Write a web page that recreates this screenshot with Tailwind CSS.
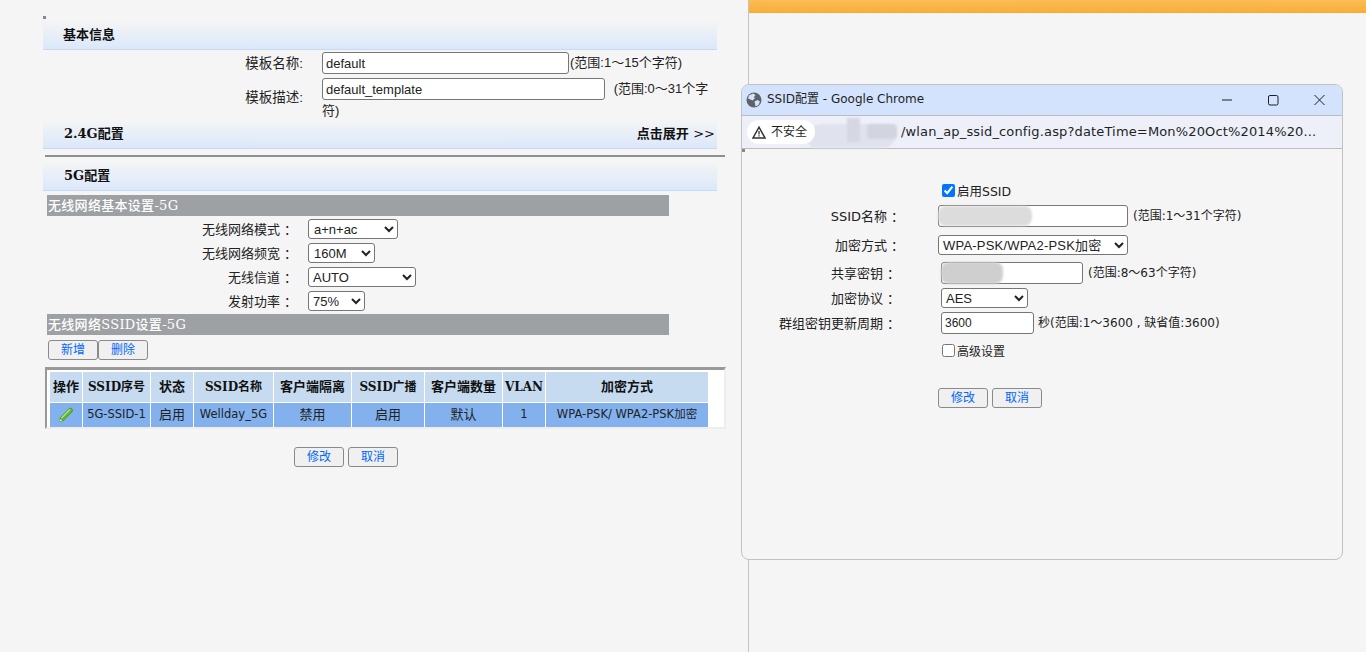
<!DOCTYPE html>
<html lang="zh-CN">
<head>
  <meta charset="UTF-8" />
  <meta name="viewport" content="width=device-width, initial-scale=1.0"/>
  <title>SSID配置</title>
  <script src="https://cdn.jsdelivr.net/npm/@tailwindcss/browser@4"></script>
</head>
<body class="bg-[#f5f5f5] h-[652px] overflow-hidden text-[13px] text-[#222] font-['Liberation_Sans','Noto_Sans_CJK_SC',sans-serif]">
<div class="relative flex h-[652px]">

  <!-- left page -->
  <div class="relative w-[749px] h-full border-r border-[#c4c4c4] pl-[43px] pt-[20px]">
    <div class="absolute left-[43px] top-[16px] w-[3px] h-[3px] bg-[#888]"></div>

    <div class="w-[674px] h-[30px] pl-[20px] flex items-center border-b border-[#c5daf3] bg-gradient-to-b from-[#f5f5f5] to-[#dbe8fa] font-bold font-['DejaVu_Serif','Noto_Sans_CJK_SC',serif] text-[13px] text-[#111]">基本信息</div>

    <div class="flex mt-[2px] h-[22px]">
      <div class="w-[260px] text-right leading-[24px] text-[13.5px]">模板名称:</div>
      <div class="ml-[19px] flex items-center">
        <input class="w-[247px] h-[22px] px-[3px] border border-[#767676] rounded-[3px] bg-white text-[13px]" value="default" />
        <span class="ml-px text-[13px]">(范围:1～15个字符)</span>
      </div>
    </div>
    <div class="flex mt-[4px] h-[41px]">
      <div class="w-[260px] text-right leading-[40px] text-[13.5px]">模板描述:</div>
      <div class="ml-[19px] w-[392px] text-[13px] leading-[18px]">
        <input class="w-[283px] h-[22px] px-[3px] border border-[#767676] rounded-[3px] bg-white text-[13px] align-top" value="default_template" />
        <span class="ml-[5px] leading-[22px]">(范围:0～31个字符)</span>
      </div>
    </div>

    <div class="w-[674px] h-[30px] pl-[21px] pr-[20px] flex items-center justify-between border-b border-[#c5daf3] bg-gradient-to-b from-[#f5f5f5] to-[#dbe8fa] font-bold font-['DejaVu_Serif','Noto_Sans_CJK_SC',serif] text-[13px] text-[#111]">
      <span>2.4G配置</span>
      <span class="-mr-[18px]">点击展开 <span class="font-normal font-['DejaVu_Sans']">&gt;&gt;</span></span>
    </div>

    <div class="ml-[2px] mt-[6px] w-[680px] h-[2px] bg-[#8f8f8f]"></div>

    <div class="mt-[4px] w-[674px] h-[30px] pl-[21px] flex items-center border-b border-[#c5daf3] bg-gradient-to-b from-[#f5f5f5] to-[#dbe8fa] font-bold font-['DejaVu_Serif','Noto_Sans_CJK_SC',serif] text-[13px] text-[#111]">5G配置</div>

    <div class="ml-[4px] mt-[4px] w-[622px] h-[21px] pl-px bg-[#9ea1a3] text-white text-[13px] leading-[21px] font-medium tracking-[0.3px] font-['DejaVu_Serif','Noto_Sans_CJK_SC',serif]">无线网络基本设置-5G</div>

    <div class="mt-[3px] flex flex-col gap-[4px]">
      <div class="flex h-[20px] items-center">
        <div class="w-[254px] text-right text-[13px] pt-px">无线网络模式<span class="ml-[4px]">：</span></div>
        <select class="ml-[11px] w-[90px] h-[20px] border border-[#767676] rounded-[3px] bg-white text-[13px] pl-px"><option>a+n+ac</option></select>
      </div>
      <div class="flex h-[20px] items-center">
        <div class="w-[254px] text-right text-[13px] pt-px">无线网络频宽<span class="ml-[4px]">：</span></div>
        <select class="ml-[11px] w-[67px] h-[20px] border border-[#767676] rounded-[3px] bg-white text-[13px] pl-px"><option>160M</option></select>
      </div>
      <div class="flex h-[20px] items-center">
        <div class="w-[254px] text-right text-[13px] pt-px">无线信道<span class="ml-[4px]">：</span></div>
        <select class="ml-[11px] w-[108px] h-[20px] border border-[#767676] rounded-[3px] bg-white text-[13px]"><option>AUTO</option></select>
      </div>
      <div class="flex h-[20px] items-center">
        <div class="w-[254px] text-right text-[13px] pt-px">发射功率<span class="ml-[4px]">：</span></div>
        <select class="ml-[11px] w-[57px] h-[20px] border border-[#767676] rounded-[3px] bg-white text-[13px]"><option>75%</option></select>
      </div>
    </div>

    <div class="ml-[4px] mt-[3px] w-[622px] h-[21px] pl-px bg-[#9ea1a3] text-white text-[13px] leading-[21px] font-medium tracking-[0.3px] font-['DejaVu_Serif','Noto_Sans_CJK_SC',serif]">无线网络SSID设置-5G</div>

    <div class="ml-[5px] mt-[5px] flex">
      <button class="w-[50px] h-[20px] border border-[#8a8a8a] rounded-[3px] bg-[#f0f0f0] text-[#0066ff] text-[12px]">新增</button>
      <button class="w-[50px] h-[20px] border border-[#8a8a8a] rounded-[3px] bg-[#f0f0f0] text-[#0066ff] text-[12px]">删除</button>
    </div>

    <div class="ml-[2px] mt-[7px] w-[681px] h-[62px] bg-white border-t-[3px] border-l-[2px] border-[#999] border-r-[2px] border-r-[#eee] border-b-[2px] border-b-[#eee] pl-[2px] pt-px">
      <table class="table-fixed border-separate border-spacing-[1px] text-[13px] text-center text-[#222]">
        <thead>
          <tr class="h-[30px] bg-[#c6dbf0] font-bold font-['DejaVu_Serif','Noto_Sans_CJK_SC',serif] text-[#111]">
            <th class="w-[32px] p-0 text-[13px] whitespace-nowrap">操作</th>
            <th class="w-[67px] p-0 text-[12px] whitespace-nowrap">SSID序号</th>
            <th class="w-[42px] p-0">状态</th>
            <th class="w-[79px] p-0 text-[12px] whitespace-nowrap">SSID名称</th>
            <th class="w-[77px] p-0 whitespace-nowrap">客户端隔离</th>
            <th class="w-[72px] p-0 text-[12px] whitespace-nowrap">SSID广播</th>
            <th class="w-[77px] p-0 whitespace-nowrap">客户端数量</th>
            <th class="w-[42px] p-0 text-[12px]">VLAN</th>
            <th class="w-[162px] p-0">加密方式</th>
          </tr>
        </thead>
        <tbody>
          <tr class="h-[24px] bg-[#82b1ee] font-['DejaVu_Sans','Noto_Sans_CJK_SC',sans-serif] text-[11.5px]">
            <td class="p-0">
              <svg class="mx-auto" width="16" height="16" viewBox="0 0 16 16">
                <path d="M1.5 14.5l1-4 8.5-8.8c.9-.8 2.2-.6 3 .2.8.9.8 2 .1 2.8L5.5 13.5z" fill="#5cb82e" stroke="#3f8a1d" stroke-width=".6"/>
                <path d="M3.5 11L12 2.5" stroke="#b6e88f" stroke-width="1.2"/>
                <path d="M1.5 14.5l.7-2.6 2 1.8z" fill="#e9e4c0"/>
              </svg>
            </td>
            <td class="p-0 whitespace-nowrap">5G-SSID-1</td>
            <td class="p-0 text-[13px]">启用</td>
            <td class="p-0">Wellday_5G</td>
            <td class="p-0 text-[13px]">禁用</td>
            <td class="p-0 text-[13px]">启用</td>
            <td class="p-0 text-[13px]">默认</td>
            <td class="p-0">1</td>
            <td class="p-0 whitespace-nowrap">WPA-PSK/ WPA2-PSK加密</td>
          </tr>
        </tbody>
      </table>
    </div>

    <div class="mt-[18px] ml-[251px] flex gap-[4px]">
      <button class="w-[50px] h-[20px] border border-[#8a8a8a] rounded-[3px] bg-[#f0f0f0] text-[#0066ff] text-[12px]">修改</button>
      <button class="w-[50px] h-[20px] border border-[#8a8a8a] rounded-[3px] bg-[#f0f0f0] text-[#0066ff] text-[12px]">取消</button>
    </div>
  </div>

  <!-- right page behind the popup -->
  <div class="flex-1">
    <div class="h-[13px] bg-gradient-to-b from-[#fbbd55] to-[#f9ac33]"></div>
  </div>

  <!-- popup window -->
  <div class="absolute left-[741px] top-[84px] w-[602px] h-[476px] bg-[#f5f5f5] border border-[#c2c2c2] rounded-[8px] overflow-hidden">
    <div class="h-[31px] bg-[#d3e3fd] flex items-center border-b border-[#b9bcc4] pl-[4px] text-[12px] font-['DejaVu_Sans','Noto_Sans_CJK_SC',sans-serif] text-[#1f1f1f]">
      <svg width="16" height="16" viewBox="0 0 16 16" class="mr-[5px]">
        <circle cx="8" cy="8" r="7.5" fill="#5f6368"/>
        <path d="M3 3.5L7 1.5 9.5 3 8 5 8.8 6.5 6.5 8.5 4.5 7.5 2 6.5z" fill="#d3e3fd"/>
        <path d="M8.5 9.5l3-1.5 2.5 1.5-1.5 3.5-3 1.5-.5-3z" fill="#d3e3fd"/>
      </svg>
      <span class="-translate-y-px">SSID配置 - Google Chrome</span>
      <div class="ml-auto flex items-center">
        <svg width="46" height="16" viewBox="0 0 46 16"><path d="M0 8h10" stroke="#1f1f1f" stroke-width="1"/></svg>
        <svg width="46" height="16" viewBox="0 0 46 16"><rect x="0.5" y="3.5" width="9.5" height="9.5" rx="1.5" fill="none" stroke="#1f1f1f"/></svg>
        <svg width="28" height="16" viewBox="0 0 28 16"><path d="M0.5 3l10 10M10.5 3l-10 10" stroke="#1f1f1f" stroke-width="1"/></svg>
      </div>
    </div>

    <div class="relative h-[33px] bg-[#edf0f9] flex items-center border-b border-[#bdbdbd] pl-[5px] text-[13px] text-[#1f1f1f] font-['DejaVu_Sans','Noto_Sans_CJK_SC',sans-serif]">
      <div class="relative z-10 flex items-center h-[24px] w-[68px] shrink-0 bg-white rounded-full pl-[5px]">
        <svg width="14" height="13" viewBox="0 0 14 13" class="mr-[5px]">
          <path d="M7 1.2L13 12H1z" fill="none" stroke="#333" stroke-width="1.5"/>
          <path d="M7 5v3.4M7 9.2v1.3" stroke="#333" stroke-width="1.3"/>
        </svg>
        <span class="text-[12px] whitespace-nowrap">不安全</span>
      </div>
      <span class="ml-[86px] whitespace-nowrap text-[13px] tracking-[0.15px]">/wlan_ap_ssid_config.asp?dateTime=Mon%20Oct%2014%20...</span>
      <!-- blurred out host name -->
      <div class="absolute left-[66px] top-[8px] w-[88px] h-[24px] bg-[#e0e3ed] rounded-[10px] blur-[1px] -skew-x-12"></div>
      <div class="absolute left-[105px] top-[2px] w-[13px] h-[24px] bg-[#d5d8e2] blur-[1px]"></div>
      <div class="absolute left-[125px] top-[8px] w-[30px] h-[15px] bg-[#d2d5df] rounded-[4px] blur-[1px]"></div>
    </div>

    <div class="relative pt-[34px] text-[13px] font-['DejaVu_Sans','Noto_Sans_CJK_SC',sans-serif] text-[#222]">
      <div class="absolute left-0 top-0 w-[3px] h-[3px] bg-[#888]"></div>

      <div class="flex items-center h-[15px] ml-[200px]">
        <input type="checkbox" checked class="w-[13px] h-[13px] accent-[#0075ff]" />
        <span class="ml-[2px] pt-[3px] text-[12.5px]">启用SSID</span>
      </div>

      <div class="relative flex items-center mt-[7px] h-[22px]">
        <div class="w-[162px] text-right pt-px">SSID名称<span class="ml-[4px]">：</span></div>
        <input class="ml-[34px] w-[190px] h-[22px] border border-[#767676] rounded-[3px] bg-white" />
        <span class="ml-[5px] text-[12px]">(范围:1～31个字符)</span>
        <div class="absolute left-[196px] top-[1px] w-[94px] h-[20px] bg-[#dcdcdc] rounded-[8px] blur-[1px]"></div>
      </div>

      <div class="flex items-center mt-[8px] h-[20px]">
        <div class="w-[162px] text-right pt-px">加密方式<span class="ml-[4px]">：</span></div>
        <select class="ml-[34px] w-[190px] h-[20px] border border-[#767676] rounded-[3px] bg-white text-[13px] tracking-[0.2px] font-['Liberation_Sans','Noto_Sans_CJK_SC',sans-serif]"><option>WPA-PSK/WPA2-PSK加密</option></select>
      </div>

      <div class="relative flex items-center mt-[7px] h-[22px]">
        <div class="w-[158px] text-right pt-px">共享密钥<span class="ml-[4px]">：</span></div>
        <input class="ml-[41px] w-[142px] h-[22px] border border-[#767676] rounded-[3px] bg-white" />
        <span class="ml-[5px] text-[12px]">(范围:8～63个字符)</span>
        <div class="absolute left-[199px] top-0 w-[62px] h-[22px] bg-[#cfcfcf] rounded-[8px] blur-[1px]"></div>
      </div>

      <div class="flex items-center mt-[4px] h-[20px]">
        <div class="w-[158px] text-right pt-px">加密协议<span class="ml-[4px]">：</span></div>
        <select class="ml-[41px] w-[87px] h-[20px] border border-[#767676] rounded-[3px] bg-white text-[13px] font-['Liberation_Sans']"><option>AES</option></select>
      </div>

      <div class="flex items-center mt-[4px] h-[22px]">
        <div class="w-[158px] text-right whitespace-nowrap pt-px">群组密钥更新周期<span class="ml-[4px]">：</span></div>
        <input class="ml-[41px] w-[93px] h-[22px] px-[3px] border border-[#767676] rounded-[3px] bg-white text-[12px] font-['Liberation_Sans']" value="3600" />
        <span class="ml-[4px] text-[12px]">秒(范围:1～3600 , 缺省值:3600)</span>
      </div>

      <div class="flex items-center mt-[9px] h-[15px] ml-[200px]">
        <input type="checkbox" class="w-[13px] h-[13px] accent-[#0075ff]" />
        <span class="ml-[2px] pt-[3px] text-[12px]">高级设置</span>
      </div>

      <div class="mt-[30px] ml-[196px] flex gap-[4px]">
        <button class="w-[50px] h-[20px] border border-[#8a8a8a] rounded-[3px] bg-[#f0f0f0] text-[#0066ff] text-[12px]">修改</button>
        <button class="w-[50px] h-[20px] border border-[#8a8a8a] rounded-[3px] bg-[#f0f0f0] text-[#0066ff] text-[12px]">取消</button>
      </div>
    </div>
  </div>
</div>
</body>
</html>
